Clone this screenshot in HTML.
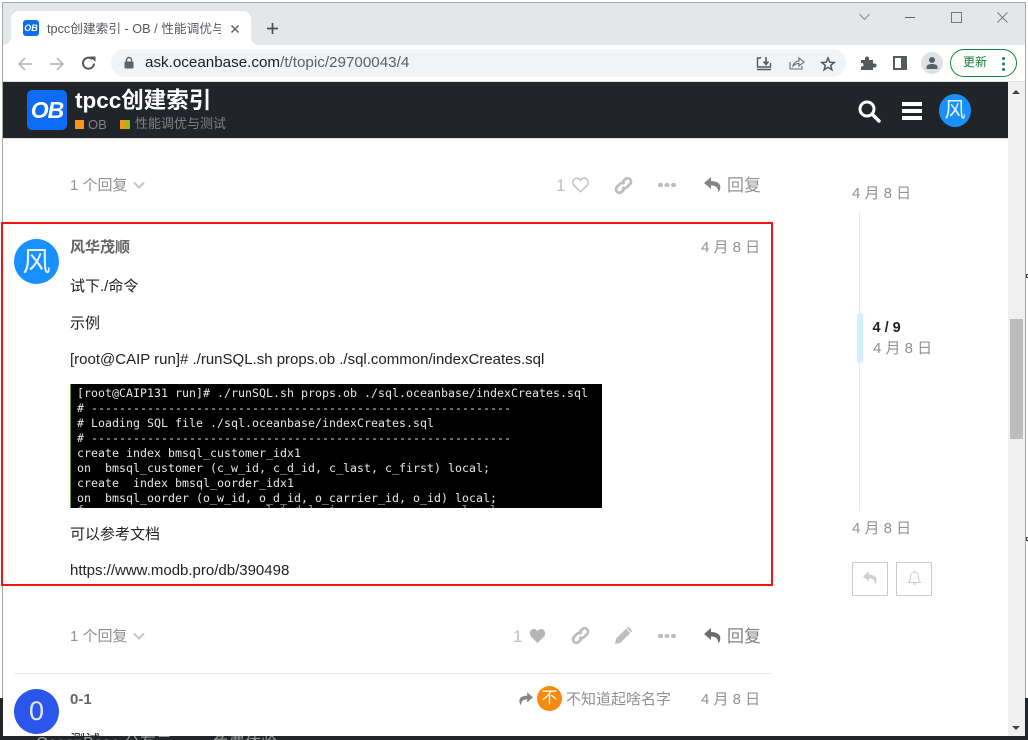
<!DOCTYPE html>
<html><head><meta charset="utf-8">
<style>
html,body{margin:0;padding:0;width:1028px;height:740px;overflow:hidden;background:#fff}
body{position:relative;font-family:"Liberation Sans","Noto Sans CJK SC",sans-serif}
.a{position:absolute;white-space:nowrap;line-height:1}
.g{color:#919191;font-size:15px}
.t{color:#222;font-size:15px}
svg{position:absolute;overflow:visible}
pre{margin:0;font-family:"DejaVu Sans Mono","Liberation Mono",monospace;font-size:11.6px;line-height:15px;color:#e6e6e6;position:absolute;letter-spacing:.02px}
</style></head><body>
<!-- desktop behind -->
<div class="a" style="left:0;top:0;width:1028px;height:740px;background:#fff"></div>
<div class="a" style="left:0;top:698px;width:3px;height:42px;background:#22252a"></div>
<div class="a" style="left:0;top:736px;width:1028px;height:4px;background:#22252a"></div>
<div class="a" style="left:1025px;top:698px;width:3px;height:42px;background:#22252a"></div>
<!-- window border -->
<div class="a" style="left:2px;top:2px;width:1024px;height:1px;background:#a8a8a8"></div>
<div class="a" style="left:2px;top:2px;width:1px;height:696px;background:#a8a8a8"></div>
<div class="a" style="left:1025px;top:2px;width:1px;height:696px;background:#a8a8a8"></div>
<!-- tab strip -->
<div class="a" style="left:3px;top:3px;width:1022px;height:42px;background:#e4e7ea"></div>
<div class="a" style="left:11px;top:11px;width:240px;height:34px;background:#fff;border-radius:8px 8px 0 0"></div>
<svg style="left:3px;top:37px" width="8" height="8"><path d="M8 0A8 8 0 0 1 0 8H8Z" fill="#fff"/></svg>
<svg style="left:251px;top:37px" width="8" height="8"><path d="M0 0A8 8 0 0 0 8 8H0Z" fill="#fff"/></svg>
<div class="a" style="left:23px;top:20px;width:16px;height:16px;background:#0d6cf5;border-radius:3px;color:#fff;font:italic bold 9px/16px 'Liberation Sans',sans-serif;text-align:center">OB</div>
<div class="a" style="left:47px;top:22px;width:174px;overflow:hidden;font-size:12.700px;line-height:14px;color:#55585c">tpcc创建索引 - OB / 性能调优与测试</div>
<svg style="left:231px;top:25px" width="8" height="8"><path d="M.5 .5L7.500 7.500M7.500 .5L.5 7.500" stroke="#5f6368" stroke-width="1.500"/></svg>
<svg style="left:267px;top:23px" width="11" height="11"><path d="M5.500 0V11M0 5.500H11" stroke="#4a4d51" stroke-width="1.700"/></svg>
<!-- window controls -->
<svg style="left:859px;top:13px" width="11" height="8"><path d="M.5 1L5.500 6.500L10.500 1" fill="none" stroke="#8a8d91" stroke-width="1"/></svg>
<div class="a" style="left:905px;top:17px;width:10px;height:1px;background:#666"></div>
<div class="a" style="left:951px;top:12px;width:9px;height:9px;border:1px solid #777"></div>
<svg style="left:997px;top:12px" width="11" height="11"><path d="M.5 .5L10.500 10.500M10.500 .5L.5 10.500" stroke="#777" stroke-width="1"/></svg>
<!-- toolbar -->
<div class="a" style="left:3px;top:45px;width:1022px;height:37px;background:#fff"></div>
<div class="a" style="left:3px;top:81px;width:1022px;height:1px;background:#dfe1e4"></div>
<svg style="left:17px;top:56px" width="16" height="16"><path d="M15 8H2M8 2L2 8L8 14" fill="none" stroke="#b8babd" stroke-width="1.700"/></svg>
<svg style="left:49px;top:56px" width="16" height="16"><path d="M1 8H14M8 2L14 8L8 14" fill="none" stroke="#b8babd" stroke-width="1.700"/></svg>
<svg style="left:81px;top:55px" width="16" height="16"><path d="M13 8.500A5.500 5.500 0 1 1 11.300 4.200" fill="none" stroke="#55585c" stroke-width="2"/><path d="M9 1.500H14.500V7Z" fill="#55585c"/></svg>
<div class="a" style="left:111px;top:49px;width:735px;height:28px;background:#f1f3f4;border-radius:14px"></div>
<svg style="left:124px;top:56px" width="10" height="13"><path d="M2.500 6V4A2.500 2.500 0 0 1 7.500 4V6" fill="none" stroke="#5f6368" stroke-width="1.400"/><rect x="0.500" y="5.500" width="9" height="7" rx="1" fill="#5f6368"/></svg>
<div class="a" style="left:145px;top:55px;font-size:15.200px;color:#5d6064"><span style="color:#202124">ask.oceanbase.com</span>/t/topic/29700043/4</div>
<svg style="left:756px;top:56px" width="16" height="16"><path d="M5 2H1.500V11H14.500V7M1 13.500H15" fill="none" stroke="#55585c" stroke-width="1.400"/><path d="M10 1V8M7.500 5.500L10 8.500L12.500 5.500" fill="none" stroke="#55585c" stroke-width="1.600"/></svg>
<svg style="left:789px;top:56px" width="16" height="14"><path d="M1 6V13H13V10" fill="none" stroke="#66696d" stroke-width="1.100"/><path d="M4 10C5 6 8 5 10 5V2L15 6L10 10V7.500C8 7.500 6 8 4 10Z" fill="none" stroke="#66696d" stroke-width="1.100"/></svg>
<svg style="left:821px;top:57px" width="14" height="14"><path d="M7 1L8.700 5.200L13.200 5.500L9.700 8.400L10.900 12.800L7 10.400L3.100 12.800L4.300 8.400L.8 5.500L5.300 5.200Z" fill="none" stroke="#55585c" stroke-width="1.500"/></svg>
<svg style="left:860px;top:55px" width="16" height="16"><path d="M1 5H5V3.500A2 2 0 0 1 9 3.500V5H13V8.500H14.500A2 2 0 0 1 14.500 12.500H13V15H1V11.500H2.500A2 2 0 0 0 2.500 8H1Z" fill="#55585c"/></svg>
<div class="a" style="left:893px;top:56px;border:2px solid #55585c;border-right-width:6px;width:6px;height:10px"></div>
<div class="a" style="left:921px;top:52px;width:22px;height:22px;border-radius:50%;background:#dfe1e5"></div>
<svg style="left:925px;top:56px" width="14" height="14"><circle cx="7" cy="4" r="3" fill="#56606f"/><path d="M1.500 13V11C1.500 9 4 8 7 8S12.500 9 12.500 11V13Z" fill="#56606f"/></svg>
<div class="a" style="left:950px;top:49px;width:65px;height:26px;border:1px solid #188038;border-radius:14px"></div>
<div class="a" style="left:963px;top:56px;font-size:12px;color:#188038">更新</div>
<div class="a" style="left:1002px;top:57px;width:3px;height:3px;background:#188038;border-radius:50%;box-shadow:0 5.500px 0 #188038,0 11px 0 #188038"></div>
<!-- site header -->
<div class="a" style="left:3px;top:82px;width:1005px;height:56px;background:#212429"></div>
<div class="a" style="left:3px;top:138px;width:1005px;height:1px;background:#e4e4e4"></div>
<div class="a" style="left:27px;top:90px;width:40px;height:40px;background:#0d6cf5;border-radius:5px;color:#fff;font:italic bold 23px/41px 'Liberation Sans',sans-serif;text-align:center;letter-spacing:-1px">OB</div>
<div class="a" style="left:75px;top:90px;font-size:22.500px;font-weight:bold;color:#fff">tpcc创建索引</div>
<div class="a" style="left:75px;top:120px;width:9px;height:9px;background:#f7941d"></div>
<div class="a" style="left:88px;top:118px;font-size:13px;color:#7f8184">OB</div>
<div class="a" style="left:120px;top:120px;width:5px;height:9px;background:#f7941d"></div>
<div class="a" style="left:125px;top:120px;width:5px;height:9px;background:#8ec30f"></div>
<div class="a" style="left:135px;top:117px;font-size:13px;color:#7f8184">性能调优与测试</div>
<svg style="left:858px;top:100px" width="23" height="23"><circle cx="9" cy="9" r="7" fill="none" stroke="#fff" stroke-width="3"/><path d="M14 14L21 21" stroke="#fff" stroke-width="3.400" stroke-linecap="round"/></svg>
<div class="a" style="left:902px;top:102px;width:20px;height:3.500px;background:#fff;box-shadow:0 7px 0 #fff,0 14px 0 #fff"></div>
<div class="a" style="left:939px;top:94px;width:32px;height:33px;background:#1890ff;border-radius:50%;color:#e8f3ff;font-size:21px;line-height:34px;text-align:center">风</div>
<!-- scrollbar -->
<div class="a" style="left:1008px;top:82px;width:17px;height:654px;background:#f0f0f0"></div>
<div class="a" style="left:1010px;top:319px;width:13px;height:120px;background:#bdbdbd"></div>
<svg style="left:1012px;top:89px" width="9" height="6"><path d="M0 5L4 1L8 5Z" fill="#444"/></svg>
<svg style="left:1012px;top:725px" width="9" height="6"><path d="M0 1L4 5L8 1Z" fill="#444"/></svg>
<div class="a" style="left:1026px;top:274px;width:2px;height:4px;border:1px solid #333;border-right:0;box-sizing:border-box"></div>
<div class="a" style="left:1026px;top:537px;width:2px;height:4px;border:1px solid #333;border-right:0;box-sizing:border-box"></div>
<!-- top action row -->
<div class="a g" style="left:70px;top:178px">1 个回复</div>
<svg style="left:133px;top:181px" width="12" height="9"><path d="M1 1.500L6 6.500L11 1.500" fill="none" stroke="#c4c4c4" stroke-width="2"/></svg>
<div class="a" style="left:556px;top:177px;font-size:17px;color:#bdbdbd">1</div>
<svg style="left:572px;top:177px" width="17" height="16" viewBox="0 0 17 16"><path d="M8.500 14.800L2 8.500C-.6 5.500 1.500 1.200 4.800 1.200C6.500 1.200 7.800 2.200 8.500 3.500C9.200 2.200 10.500 1.200 12.200 1.200C15.500 1.200 17.600 5.500 15 8.500Z" fill="none" stroke="#bdbdbd" stroke-width="1.300"/></svg>
<svg style="left:615px;top:177px" width="17" height="17" viewBox="1 1 15 15"><g fill="none" stroke="#bdbdbd" stroke-width="2.400"><path d="M7.500 5.500L10 3A3 3 0 0 1 14.300 7.200L11.500 10A3 3 0 0 1 7.500 10"/><path d="M9.500 11.500L7 14A3 3 0 0 1 2.700 9.800L5.500 7A3 3 0 0 1 9.500 7"/></g></svg>
<div class="a" style="left:658px;top:182.500px;width:4.500px;height:4.500px;background:#bdbdbd;border-radius:50%;box-shadow:6.500px 0 0 #bdbdbd,13px 0 0 #bdbdbd"></div>
<svg style="left:704px;top:177px" width="18" height="16" viewBox="0 0 18 16"><path d="M7 0L0 6L7 12V8.500C11 8.500 14 9.500 14.500 15.500C17.500 11 18 4.500 7 4Z" fill="#858585"/></svg>
<div class="a" style="left:727px;top:177px;font-size:17px;color:#919191">回复</div>
<div class="a g" style="left:852px;top:186px">4 月 8 日</div>
<!-- red box post -->
<div class="a" style="left:1px;top:222px;width:768px;height:360px;border:2px solid #f01414"></div>
<div class="a" style="left:14px;top:239px;width:45px;height:45px;background:#1890ff;border-radius:50%;color:#e8f3ff;font-size:28px;line-height:46px;text-align:center">风</div>
<div class="a" style="left:70px;top:240px;font-size:15px;font-weight:bold;color:#646464">风华茂顺</div>
<div class="a g" style="left:701px;top:240px">4 月 8 日</div>
<div class="a t" style="left:70px;top:279px">试下./命令</div>
<div class="a t" style="left:70px;top:316px">示例</div>
<div class="a t" style="left:70px;top:352px">[root@CAIP run]# ./runSQL.sh props.ob ./sql.common/indexCreates.sql</div>
<div class="a" style="left:70px;top:384px;width:532px;height:124px;background:#000;overflow:hidden"><div class="a" style="left:0;top:0;width:1px;height:124px;background:#6d9a3a"></div>
<pre style="left:7px;top:2px;">[root@CAIP131 run]# ./runSQL.sh props.ob ./sql.oceanbase/indexCreates.sql
# ------------------------------------------------------------
# Loading SQL file ./sql.oceanbase/indexCreates.sql
# ------------------------------------------------------------
create index bmsql_customer_idx1
on  bmsql_customer (c_w_id, c_d_id, c_last, c_first) local;
create  index bmsql_oorder_idx1
on  bmsql_oorder (o_w_id, o_d_id, o_carrier_id, o_id) local;</pre>
<pre style="left:7px;top:119px;color:#aaa">f                          l i d l  i                  l   l</pre></div>
<div class="a t" style="left:70px;top:527px">可以参考文档</div>
<div class="a t" style="left:70px;top:563px">https://www.modb.pro/db/390498</div>
<!-- lower action row -->
<div class="a g" style="left:70px;top:629px">1 个回复</div>
<svg style="left:133px;top:632px" width="12" height="9"><path d="M1 1.500L6 6.500L11 1.500" fill="none" stroke="#c4c4c4" stroke-width="2"/></svg>
<div class="a" style="left:513px;top:628px;font-size:17px;color:#bdbdbd">1</div>
<svg style="left:529px;top:628px" width="17" height="16" viewBox="0 0 17 16"><path d="M8.500 15L2 8.500C-.6 5.500 1.500 1 4.800 1C6.500 1 7.800 2 8.500 3.300C9.200 2 10.500 1 12.200 1C15.500 1 17.600 5.500 15 8.500Z" fill="#b5b5b5"/></svg>
<svg style="left:572px;top:627px" width="17" height="17" viewBox="1 1 15 15"><g fill="none" stroke="#bdbdbd" stroke-width="2.400"><path d="M7.500 5.500L10 3A3 3 0 0 1 14.300 7.200L11.500 10A3 3 0 0 1 7.500 10"/><path d="M9.500 11.500L7 14A3 3 0 0 1 2.700 9.800L5.500 7A3 3 0 0 1 9.500 7"/></g></svg>
<svg style="left:615px;top:627px" width="17" height="17" viewBox="0 0 17 17"><path d="M0 17L1.200 11.500L11 1.700L15.300 6L5.500 15.800Z M12.300 .5C13 0 13.800 0 14.300 .5L16.500 2.700C17 3.300 17 4 16.500 4.700L16 5.300L11.700 1Z" fill="#bdbdbd"/></svg>
<div class="a" style="left:658px;top:633.500px;width:4.500px;height:4.500px;background:#bdbdbd;border-radius:50%;box-shadow:6.500px 0 0 #bdbdbd,13px 0 0 #bdbdbd"></div>
<svg style="left:704px;top:628px" width="18" height="16" viewBox="0 0 18 16"><path d="M7 0L0 6L7 12V8.500C11 8.500 14 9.500 14.500 15.500C17.500 11 18 4.500 7 4Z" fill="#6c6c6c"/></svg>
<div class="a" style="left:727px;top:628px;font-size:17px;color:#808080">回复</div>
<div class="a" style="left:14px;top:673px;width:757px;height:1px;background:#e8e8e8"></div>
<!-- next post -->
<div class="a" style="left:14px;top:689px;width:45px;height:45px;background:#2b55eb;border-radius:50%;color:#e3e8ff;font-size:27px;line-height:45px;text-align:center">0</div>
<div class="a" style="left:70px;top:692px;font-size:15px;font-weight:bold;color:#646464">0-1</div>
<svg style="left:518px;top:692px" width="15" height="14" viewBox="0 0 18 16"><path d="M11 0L18 6L11 12V8.500C7 8.500 4 9.500 3.500 15.500C.5 11 0 4.500 11 4Z" fill="#858585"/></svg>
<div class="a" style="left:537px;top:686px;width:25px;height:25px;background:#f7890e;border-radius:50%;color:#fff;font-size:16px;line-height:25px;text-align:center">不</div>
<div class="a" style="left:566px;top:692px;font-size:15px;color:#919191">不知道起啥名字</div>
<div class="a g" style="left:701px;top:692px">4 月 8 日</div>
<div class="a" style="left:70px;top:733px;height:3px;width:36px;overflow:hidden;font-size:15px;color:#222;line-height:15px">测试 </div>
<div class="a" style="left:36px;top:736px;height:4px;overflow:hidden;color:#999;font-size:16px;line-height:16px">OceanBase 公有云</div>
<div class="a" style="left:213px;top:736px;height:4px;overflow:hidden;color:#999;font-size:16px;line-height:16px">免费体验</div>
<!-- timeline -->
<div class="a" style="left:859px;top:212px;width:1px;height:299px;background:#d1f0ff"></div>
<div class="a" style="left:857px;top:313px;width:6px;height:50px;background:#d1f0ff;border-radius:3px"></div>
<div class="a" style="left:872.500px;top:321px;font-size:14.500px;font-weight:bold;color:#222">4 / 9</div>
<div class="a g" style="left:873px;top:341px">4 月 8 日</div>
<div class="a g" style="left:852px;top:521px">4 月 8 日</div>
<div class="a" style="left:852px;top:562px;width:34px;height:32px;border:1px solid #ccc"></div>
<div class="a" style="left:896px;top:562px;width:34px;height:32px;border:1px solid #ccc"></div>
<svg style="left:863px;top:571px" width="15" height="14" viewBox="0 0 18 16"><path d="M7 0L0 6L7 12V8.500C11 8.500 14 9.500 14.500 15.500C17.500 11 18 4.500 7 4Z" fill="#cfcfcf"/></svg>
<svg style="left:908px;top:570px" width="13" height="16" viewBox="0 0 13 16"><path d="M.5 12.500C2 11 2.500 9.500 2.500 6.500C2.500 4 4 2.300 6.500 2.300S10.500 4 10.500 6.500C10.500 9.500 11 11 12.500 12.500Z" fill="none" stroke="#cfcfcf" stroke-width="1"/><path d="M6.500 .5V2.300M5 14H8" stroke="#cfcfcf" stroke-width="1.300"/></svg>
</body></html>
